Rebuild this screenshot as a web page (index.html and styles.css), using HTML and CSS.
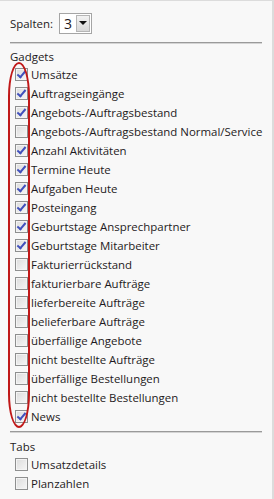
FILE: index.html
```html
<!DOCTYPE html>
<html lang="de">
<head>
	<meta charset="UTF-8">
	<title>Gadgets</title>
	<link rel="stylesheet" href="styles.css">
</head>
<body>
	<div class="panel">
		<div class="columns-row">
			<label for="cols">Spalten:</label>
			<div class="fake-select" id="cols">
				<span class="value">3</span>
				<span class="arrow"></span>
			</div>
		</div>
		<div class="sep"></div>

		<div class="group gadgets">
			<div class="group-title">Gadgets</div>
			<label class="item"><input type="checkbox" checked>Umsätze</label>
			<label class="item"><input type="checkbox" checked>Auftragseingänge</label>
			<label class="item"><input type="checkbox" checked>Angebots-/Auftragsbestand</label>
			<label class="item"><input type="checkbox">Angebots-/Auftragsbestand Normal/Service</label>
			<label class="item"><input type="checkbox" checked>Anzahl Aktivitäten</label>
			<label class="item"><input type="checkbox" checked>Termine Heute</label>
			<label class="item"><input type="checkbox" checked>Aufgaben Heute</label>
			<label class="item"><input type="checkbox" checked>Posteingang</label>
			<label class="item"><input type="checkbox" checked>Geburtstage Ansprechpartner</label>
			<label class="item"><input type="checkbox" checked>Geburtstage Mitarbeiter</label>
			<label class="item"><input type="checkbox">Fakturierrückstand</label>
			<label class="item"><input type="checkbox">fakturierbare Aufträge</label>
			<label class="item"><input type="checkbox">lieferbereite Aufträge</label>
			<label class="item"><input type="checkbox">belieferbare Aufträge</label>
			<label class="item"><input type="checkbox">überfällige Angebote</label>
			<label class="item"><input type="checkbox">nicht bestellte Aufträge</label>
			<label class="item"><input type="checkbox">überfällige Bestellungen</label>
			<label class="item"><input type="checkbox">nicht bestellte Bestellungen</label>
			<label class="item"><input type="checkbox" checked>News</label>
			<!-- red marker drawn over the checkbox column -->
			<div class="marker"></div>
		</div>
		<div class="sep sep-low"></div>

		<div class="group">
			<div class="group-title">Tabs</div>
			<label class="item"><input type="checkbox">Umsatzdetails</label>
			<label class="item"><input type="checkbox">Planzahlen</label>
		</div>
	</div>
</body>
</html>
```

FILE: styles.css
```css
* {
	margin: 0;
	padding: 0;
	box-sizing: border-box;
}

body {
	font-family: "Open Sans", "Noto Sans", sans-serif;
	font-size: 11.45px;
	color: #1e1a22;
	background-color: #f8f8f8;
	width: 274px;
	height: 499px;
	overflow: hidden;
}

.panel {
	height: 499px;
	border-top: 1px solid #dcdcdc;
	border-right: 2px solid #dcdcdc;
	padding: 11px 10px 0 10px;
}

.columns-row {
	display: flex;
	align-items: center;
	gap: 6px;
	height: 22px;
}

.fake-select {
	display: flex;
	align-items: stretch;
	height: 21px;
	width: 33px;
	border: 1px solid #a5a5a5;
	background-color: #fff;
	padding: 1px;
}

.fake-select .value {
	flex: 1;
	font-size: 14px;
	line-height: 17px;
	padding-left: 3px;
}

.fake-select .arrow {
	width: 14px;
	background: linear-gradient(#f2f2f2, #d8d8d8);
	border: 1px solid #b5b5b5;
	display: flex;
	align-items: center;
	justify-content: center;
}

.fake-select .arrow::after {
	content: "";
	border-left: 4px solid transparent;
	border-right: 4px solid transparent;
	border-top: 4px solid #111;
}

.sep {
	height: 2px;
	border-top: 1px solid #9a9a9a;
	border-bottom: 1px solid #d4d4d4;
	margin: 8px 0 5px 0;
}

.sep-low {
	margin: 5px 0 6px 0;
}

.group {
	position: relative;
}

.group-title {
	height: 16px;
	line-height: 16px;
}

.item {
	display: flex;
	align-items: center;
	height: 19px;
	white-space: nowrap;
}

.item input {
	appearance: none;
	-webkit-appearance: none;
	width: 13px;
	height: 13px;
	margin: 0 3px 0 5px;
	border: 1px solid #8e8f8f;
	background: linear-gradient(135deg, #dcdcdc, #f6f6f6);
	box-shadow: inset 0 0 0 1px #f4f4f4;
	position: relative;
	flex: none;
}

.item input:checked::after {
	content: "";
	position: absolute;
	left: 3px;
	top: 0px;
	width: 3px;
	height: 7px;
	border-right: 2px solid #4050bc;
	border-bottom: 2px solid #4050bc;
	transform: rotate(40deg);
}

.marker {
	position: absolute;
	left: -2px;
	top: 13px;
	width: 22px;
	height: 366px;
	border: 2px solid #c01818;
	border-radius: 11px / 34px;
	pointer-events: none;
}
```
